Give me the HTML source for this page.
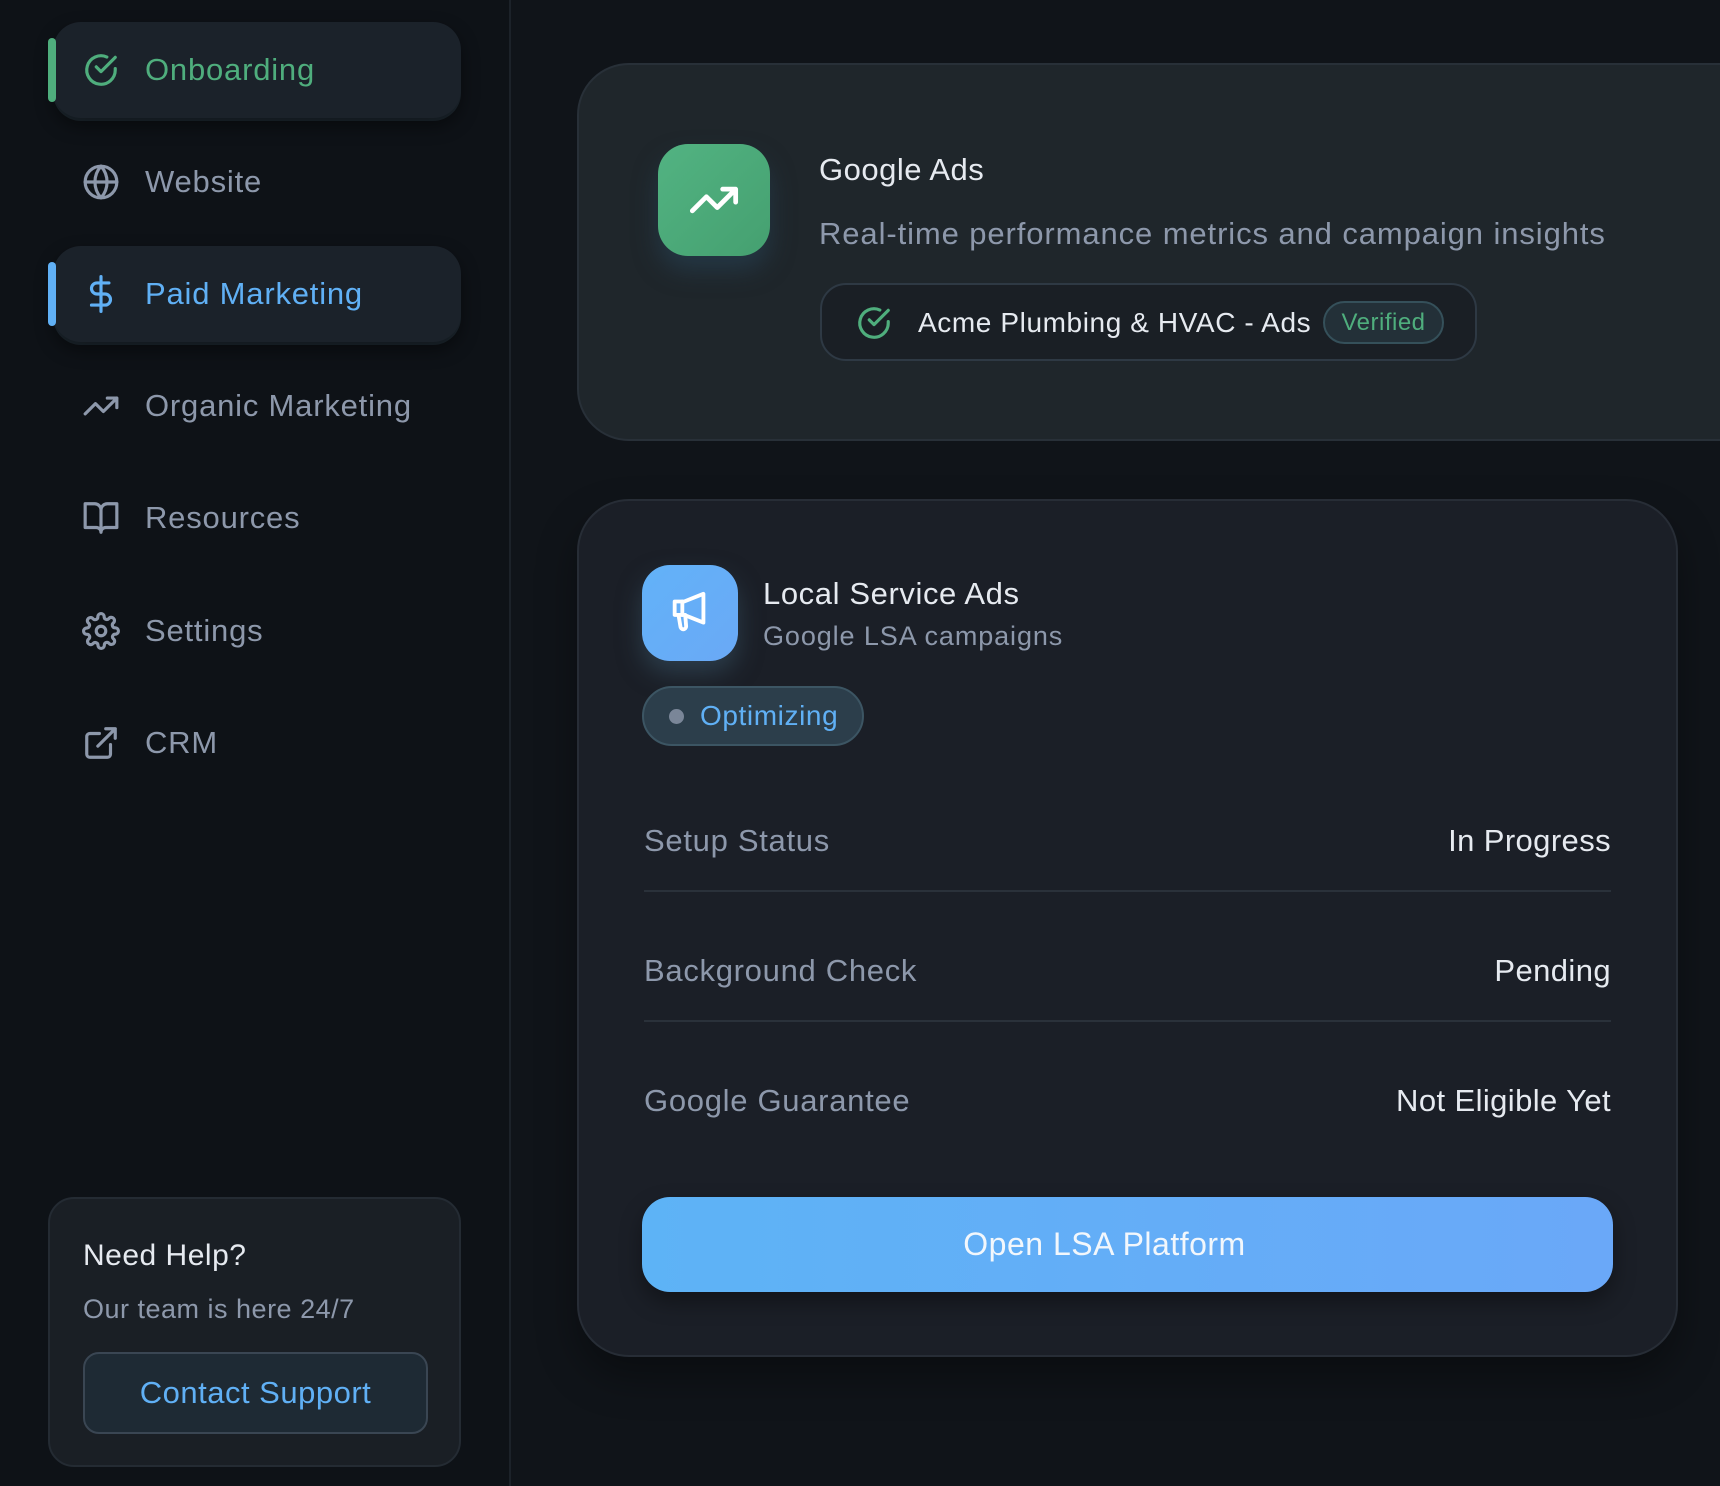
<!DOCTYPE html>
<html><head><meta charset="utf-8"><style>
*{box-sizing:border-box;margin:0;padding:0}
body{width:1720px;height:1486px;background:#101419;font-family:"Liberation Sans",sans-serif;position:relative;overflow:hidden;letter-spacing:0.5px}
.side{position:absolute;left:0;top:0;width:511px;height:1486px;background:#0e1217;border-right:2px solid #1c2229}
.nav{position:absolute;left:53px;width:408px;height:96px;display:flex;align-items:center}
.nav.act{background:#1b222a;border-radius:28px;box-shadow:0 8px 18px rgba(0,0,0,.45),0 3px 0 #1f2a33}
.nav .bar{position:absolute;left:-5px;top:16px;width:8px;height:64px;border-radius:4px}
.nav svg{position:absolute;left:29px;width:38px;height:38px;fill:none;stroke-width:2;stroke-linecap:round;stroke-linejoin:round}
.nav span{position:absolute;left:92px;font-size:31px;color:#8d98ab;letter-spacing:0.8px}
.help{position:absolute;left:48px;top:1197px;width:413px;height:270px;background:#1a1f25;border:2px solid #242b33;border-radius:26px}
.card1{position:absolute;left:577px;top:63px;width:1200px;height:378px;background:#1f262b;border:2px solid #283038;border-radius:52px}
.card2{position:absolute;left:577px;top:499px;width:1101px;height:858px;background:#1b1f27;border:2px solid #272d36;border-radius:52px;box-shadow:0 20px 40px rgba(0,0,0,.35)}
.lbl{position:absolute;left:65px;font-size:31px;color:#8d98ab;letter-spacing:0.7px}
.val{position:absolute;right:65px;font-size:31px;color:#e6eaf0;letter-spacing:0.4px}
.div{position:absolute;left:65px;right:65px;height:2px;background:#2a313a}
</style></head><body>
<div class="side">
 <div class="nav act" style="top:22px"><div class="bar" style="background:#4fae7d"></div>
  <svg viewBox="0 0 24 24" stroke="#4fae7d"><path d="M21 11.1V12a9 9 0 1 1-5.3-8.2"/><path d="M21 4 12 13l-3-3"/></svg><span style="color:#4fae7d">Onboarding</span></div>
 <div class="nav" style="top:134px"><svg viewBox="0 0 24 24" stroke="#8d98ab"><circle cx="12" cy="12" r="10"/><path d="M2 12h20M12 2a15 15 0 0 1 0 20M12 2a15 15 0 0 0 0 20"/></svg><span>Website</span></div>
 <div class="nav act" style="top:246px"><div class="bar" style="background:#60b0f5"></div>
  <svg viewBox="0 0 24 24" stroke="#60b0f5"><path d="M12 1v22M17 5H9.5a3.5 3.5 0 0 0 0 7h5a3.5 3.5 0 0 1 0 7H6"/></svg><span style="color:#60b0f5">Paid Marketing</span></div>
 <div class="nav" style="top:358px"><svg viewBox="0 0 24 24" stroke="#8d98ab"><path d="M22 7l-8.5 8.5-5-5L2 17M16 7h6v6"/></svg><span>Organic Marketing</span></div>
 <div class="nav" style="top:470px"><svg viewBox="0 0 24 24" stroke="#8d98ab"><path d="M2 3h6a4 4 0 0 1 4 4v14a3 3 0 0 0-3-3H2zM22 3h-6a4 4 0 0 0-4 4v14a3 3 0 0 1 3-3h7z"/></svg><span>Resources</span></div>
 <div class="nav" style="top:583px"><svg viewBox="0 0 24 24" stroke="#8d98ab"><circle cx="12" cy="12" r="3"/><path d="M19.4 15a1.7 1.7 0 0 0 .3 1.8l.1.1a2 2 0 1 1-2.8 2.8l-.1-.1a1.7 1.7 0 0 0-1.8-.3 1.7 1.7 0 0 0-1 1.5V21a2 2 0 1 1-4 0v-.1a1.7 1.7 0 0 0-1.1-1.5 1.7 1.7 0 0 0-1.8.3l-.1.1a2 2 0 1 1-2.8-2.8l.1-.1a1.7 1.7 0 0 0 .3-1.8 1.7 1.7 0 0 0-1.5-1H3a2 2 0 1 1 0-4h.1a1.7 1.7 0 0 0 1.5-1.1 1.7 1.7 0 0 0-.3-1.8l-.1-.1a2 2 0 1 1 2.8-2.8l.1.1a1.7 1.7 0 0 0 1.8.3H9a1.7 1.7 0 0 0 1-1.5V3a2 2 0 1 1 4 0v.1a1.7 1.7 0 0 0 1 1.5 1.7 1.7 0 0 0 1.8-.3l.1-.1a2 2 0 1 1 2.8 2.8l-.1.1a1.7 1.7 0 0 0-.3 1.8V9a1.7 1.7 0 0 0 1.5 1H21a2 2 0 1 1 0 4h-.1a1.7 1.7 0 0 0-1.5 1z"/></svg><span>Settings</span></div>
 <div class="nav" style="top:695px"><svg viewBox="0 0 24 24" stroke="#8d98ab"><path d="M18 13v6a2 2 0 0 1-2 2H5a2 2 0 0 1-2-2V8a2 2 0 0 1 2-2h6M15 3h6v6M10 14 21 3"/></svg><span>CRM</span></div>
 <div class="help">
  <div style="position:absolute;left:33px;top:40px;font-size:30px;color:#e6eaf0">Need Help?</div>
  <div style="position:absolute;left:33px;top:95px;font-size:27px;color:#8d98ab">Our team is here 24/7</div>
  <div style="position:absolute;left:33px;top:153px;width:345px;height:82px;border:2px solid #3a4653;background:#1e2a34;border-radius:16px;display:flex;align-items:center;justify-content:center;font-size:31px;color:#60b0f5">Contact Support</div>
 </div>
</div>
<div class="card1">
 <div style="position:absolute;left:79px;top:79px;width:112px;height:112px;border-radius:30px;background:linear-gradient(135deg,#52b382,#45a070);box-shadow:0 14px 24px rgba(40,70,90,.55)">
  <svg viewBox="0 0 24 24" style="position:absolute;left:30px;top:30px;width:52px;height:52px" fill="none" stroke="#fff" stroke-width="2.2" stroke-linecap="round" stroke-linejoin="round"><path d="M22 7l-8.5 8.5-5-5L2 17M16 7h6v6"/></svg></div>
 <div style="position:absolute;left:240px;top:87px;font-size:31px;color:#e6eaf0">Google Ads</div>
 <div style="position:absolute;left:240px;top:151px;font-size:31px;color:#8d98ab;letter-spacing:0.9px">Real-time performance metrics and campaign insights</div>
 <div style="position:absolute;left:241px;top:218px;width:657px;height:78px;border:2px solid #2e3944;background:#1a1f25;border-radius:26px">
  <svg viewBox="0 0 24 24" style="position:absolute;left:33px;top:19px;width:38px;height:38px" fill="none" stroke="#4fae7d" stroke-width="2" stroke-linecap="round" stroke-linejoin="round"><path d="M21 11.1V12a9 9 0 1 1-5.3-8.2"/><path d="M21 4 12 13l-3-3"/></svg>
  <div style="position:absolute;left:96px;top:22px;font-size:28px;color:#e6eaf0;letter-spacing:0.6px">Acme Plumbing &amp; HVAC - Ads</div>
  <div style="position:absolute;left:501px;top:16px;width:121px;height:43px;border:2px solid #35505a;background:#233038;border-radius:22px;font-size:24px;color:#4fae7d;display:flex;align-items:center;justify-content:center">Verified</div>
 </div>
</div>
<div class="card2">
 <div style="position:absolute;left:63px;top:64px;width:96px;height:96px;border-radius:28px;background:linear-gradient(135deg,#62b2f8,#6aa9f6);box-shadow:0 12px 24px rgba(60,90,110,.5)">
  <svg viewBox="0 0 24 24" style="position:absolute;left:25px;top:25px;width:46px;height:46px" fill="none" stroke="#fff" stroke-width="2" stroke-linecap="round" stroke-linejoin="round"><path d="M4 6h5l10-4v15l-10-4H4z"/><path d="M8 6v7M6 13l1 6a1.5 1.5 0 0 0 3 0l-0.5-6"/></svg></div>
 <div style="position:absolute;left:184px;top:75px;font-size:31px;color:#e6eaf0;letter-spacing:0.6px">Local Service Ads</div>
 <div style="position:absolute;left:184px;top:120px;font-size:27px;color:#8d98ab;letter-spacing:0.9px">Google LSA campaigns</div>
 <div style="position:absolute;left:63px;top:185px;width:222px;height:60px;border:2px solid #3c5563;background:#2c3e4b;border-radius:30px">
  <div style="position:absolute;left:25px;top:21px;width:15px;height:15px;border-radius:50%;background:#7a8698"></div>
  <div style="position:absolute;left:56px;top:12px;font-size:28px;color:#60b0f5;letter-spacing:0.6px">Optimizing</div>
 </div>
 <div class="lbl" style="top:322px">Setup Status</div><div class="val" style="top:322px">In Progress</div>
 <div class="div" style="top:389px"></div>
 <div class="lbl" style="top:452px">Background Check</div><div class="val" style="top:452px">Pending</div>
 <div class="div" style="top:519px"></div>
 <div class="lbl" style="top:582px">Google Guarantee</div><div class="val" style="top:582px">Not Eligible Yet</div>
 <div style="position:absolute;left:63px;top:696px;width:971px;height:95px;border-radius:28px;background:linear-gradient(90deg,#5db3f6,#6aa8f8);box-shadow:0 10px 22px rgba(0,0,0,.35);display:flex;align-items:center;justify-content:center;font-size:32px;color:#f2f7fc;padding-right:46px">Open LSA Platform</div>
</div>
</body></html>
